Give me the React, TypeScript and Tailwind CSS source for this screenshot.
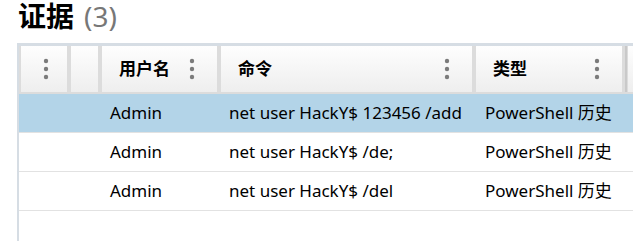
import React from "react";

const COLS = [
    { key: "menu", width: 50, label: "", dots: true },
    { key: "blank", width: 31, label: "", dots: false },
    { key: "user", width: 119, label: "用户名", dots: true },
    { key: "cmd", width: 255, label: "命令", dots: true },
    { key: "type", width: 150, label: "类型", dots: true },
];

const ROWS = [
    { user: "Admin", cmd: "net user HackY$ 123456 /add", type: "PowerShell 历史", selected: true },
    { user: "Admin", cmd: "net user HackY$ /de;", type: "PowerShell 历史", selected: false },
    { user: "Admin", cmd: "net user HackY$ /del", type: "PowerShell 历史", selected: false },
];

function Dots() {
    return (
        <svg width="6" height="22" viewBox="0 0 6 22" className="shrink-0">
            <circle cx="3" cy="3" r="2.2" fill="#7b7b7b" />
            <circle cx="3" cy="11" r="2.2" fill="#7b7b7b" />
            <circle cx="3" cy="19" r="2.2" fill="#7b7b7b" />
        </svg>
    );
}

export default function App() {
    return (
        <div className="w-[633px] h-[241px] overflow-hidden bg-white font-['Noto_Sans','Noto_Sans_CJK_SC',sans-serif] text-black">
            {/* Title */}
            <div className="h-[43px] pl-[18px] flex items-start leading-[32px]">
                <span className="text-[28px] font-bold">证据</span>
                <span className="text-[28px] text-[#777] ml-[10px]">(3)</span>
            </div>

            <div className="ml-[17px] border-l-2 border-[#d6dde4] h-[198px]">
                {/* Header */}
                <div className="flex bg-[#dcdcdc] border-t-[3px] border-[#d6dde4] h-[51px] pb-[2px] w-[700px]">
                    {COLS.map((c) => (
                        <div key={c.key} style={{ width: c.width }} className="shrink-0 h-full px-[2px]">
                            <div className="h-full bg-gradient-to-b from-[#fefefe] to-[#eeeeee] flex items-center">
                                {c.key === "menu" ? (
                                    <div className="w-full flex justify-center pl-[4px]"><Dots /></div>
                                ) : c.label ? (
                                    <div className="w-full flex items-center justify-between pl-[17px] pr-[22px]">
                                        <span className="text-[17px] font-bold">{c.label}</span>
                                        <Dots />
                                    </div>
                                ) : null}
                            </div>
                        </div>
                    ))}
                    <div className="shrink-0 h-full pl-[1px] flex">
                        <div className="w-[2px] h-full bg-[#c9c9c9]" />
                        <div className="w-[40px] h-full ml-[1px] bg-gradient-to-b from-[#fefefe] to-[#eeeeee]" />
                    </div>
                </div>

                {/* Rows */}
                {ROWS.map((r, i) => (
                    <div key={i} className={`flex h-[39px] border-b border-[#e2e2e2] ${r.selected ? "bg-[#b3d4e8]" : "bg-white"}`}>
                        <div className="w-[50px] shrink-0" />
                        <div className="w-[31px] shrink-0" />
                        <div className="w-[119px] shrink-0 pl-[10px] flex items-center text-[17px] whitespace-nowrap">{r.user}</div>
                        <div className="w-[255px] shrink-0 pl-[10px] flex items-center text-[17px] whitespace-nowrap">{r.cmd}</div>
                        <div className="w-[150px] shrink-0 pl-[11px] flex items-center text-[17px] whitespace-nowrap">{r.type}</div>
                        <div className="flex-1" />
                    </div>
                ))}
            </div>
        </div>
    );
}
